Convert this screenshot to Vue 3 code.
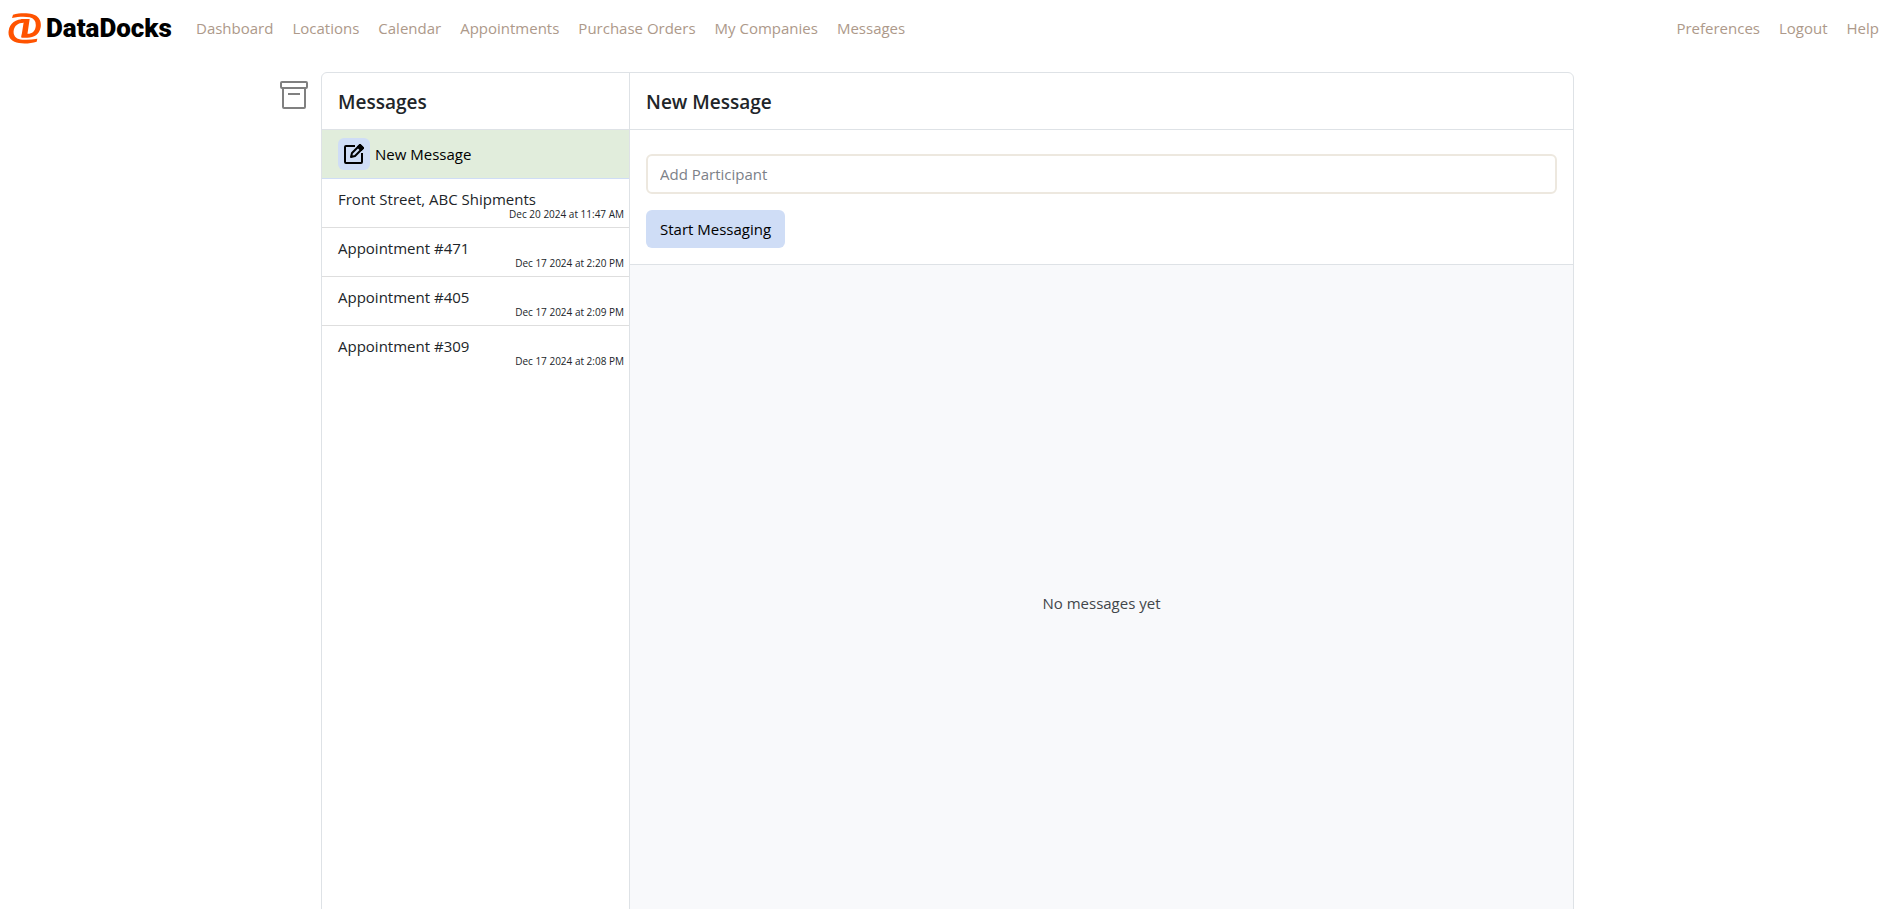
<script setup>
import { ref } from 'vue'

const mainLinks = ['Dashboard', 'Locations', 'Calendar', 'Appointments', 'Purchase Orders', 'My Companies', 'Messages']
const userLinks = ['Preferences', 'Logout', 'Help']
const threads = [
  { title: 'Front Street, ABC Shipments', date: 'Dec 20 2024 at 11:47 AM' },
  { title: 'Appointment #471', date: 'Dec 17 2024 at 2:20 PM' },
  { title: 'Appointment #405', date: 'Dec 17 2024 at 2:09 PM' },
  { title: 'Appointment #309', date: 'Dec 17 2024 at 2:08 PM' }
]
const participant = ref('')
</script>

<template>
  <div class="page">
    <header class="navbar">
      <a class="brand" href="#" aria-label="DataDocks">
        <svg class="brand-mark" viewBox="0 0 99 93" fill="#ff5300" aria-hidden="true">
          <path d="M15 5C35 0 58 0 74 4C93 9 101 25 98 43C94 65 78 74 58 74H40L42 62H59C73 62 81 54 83 41C85 26 79 17 65 13C50 10 31 11 12 15Z" />
          <path d="M49 18L47 29C30 29 19 38 17 53C15 69 26 79 43 80C58 81 73 80 88 77L86 86C70 91 49 93 33 90C10 87-1 73 2 53C5 31 23 18 49 18Z" />
          <path d="M40 18H65L57 72H40L47 28H38Z" />
        </svg>
        <span class="brand-name">DataDocks</span>
      </a>
      <nav class="links" aria-label="Main">
        <a v-for="link in mainLinks" :key="link" href="#">{{ link }}</a>
      </nav>
      <nav class="links user-links" aria-label="Account">
        <a v-for="link in userLinks" :key="link" href="#">{{ link }}</a>
      </nav>
    </header>

    <main class="layout">
      <button class="archive" type="button" aria-label="Archive">
        <svg viewBox="0 0 28 28" fill="none" stroke="#808080" stroke-width="2" aria-hidden="true">
          <rect x="1" y="1" width="26" height="6" rx="1" />
          <path d="M3 7V26a1 1 0 0 0 1 1H24a1 1 0 0 0 1-1V7M8 13H20" />
        </svg>
      </button>
      <div class="card">
        <aside class="sidebar">
          <h2 class="heading">Messages</h2>
          <button class="new-message" type="button">
            <span class="compose">
              <svg viewBox="0 0 20 20" fill="none" stroke="#000" stroke-width="2" stroke-linejoin="round" aria-hidden="true">
                <path d="M11 2H2a1 1 0 0 0-1 1V18a1 1 0 0 0 1 1H17a1 1 0 0 0 1-1V9" />
                <path d="M7 13L8 9L16 1L19 4L11 12Z" />
                <path d="M14 3L16 1L19 4L17 6Z" fill="#000" />
              </svg>
            </span>
            <span>New Message</span>
          </button>
          <ul class="threads">
            <li v-for="thread in threads" :key="thread.title">
              <a class="thread" href="#">
                <span class="thread-title">{{ thread.title }}</span>
                <time class="thread-date">{{ thread.date }}</time>
              </a>
            </li>
          </ul>
        </aside>
        <section class="conversation">
          <h2 class="heading">New Message</h2>
          <form class="composer" @submit.prevent>
            <input v-model="participant" type="text" placeholder="Add Participant" aria-label="Add Participant" />
            <button type="submit">Start Messaging</button>
          </form>
          <div class="empty">No messages yet</div>
        </section>
      </div>
    </main>
  </div>
</template>

<style>
body {
  margin: 0;
  background: #fff;
}
</style>

<style scoped>
.page,
.page * {
  box-sizing: border-box;
}

.page {
  height: 100vh;
  overflow: hidden;
  font-family: "Segoe UI", "Open Sans", "Noto Sans", sans-serif;
  font-size: 15px;
  line-height: 24px;
  color: #212529;
}

a {
  color: inherit;
  text-decoration: none;
}

button,
input {
  font: inherit;
}

.navbar {
  display: flex;
  align-items: center;
  height: 56px;
  padding: 0 14px 0 8px;
}

.brand {
  display: flex;
  align-items: center;
  gap: 5px;
  margin-right: 24px;
  color: #000;
}

.brand-mark {
  width: 33px;
  height: 31px;
}

.brand-name {
  width: 126px;
  font-family: Roboto, sans-serif;
  font-size: 26px;
  font-weight: 900;
}

.links {
  display: flex;
  gap: 19px;
  color: #ad998a;
}

.user-links {
  margin-left: auto;
}

.layout {
  display: grid;
  grid-template-columns: 41px minmax(0, 1fr) 39px;
  max-width: 1333px;
  margin: 16px auto 0;
}

.archive {
  align-self: start;
  width: 28px;
  height: 28px;
  margin-top: 9px;
  padding: 0;
  border: 0;
  background: none;
}

.archive svg {
  display: block;
}

.card {
  display: grid;
  grid-template-columns: minmax(0, 308fr) minmax(0, 943fr);
  height: calc(100vh - 39px);
  border: 1px solid #dee2e6;
  border-radius: 6px;
}

.sidebar {
  border-right: 1px solid #dee2e6;
}

.heading {
  height: 57px;
  margin: 0;
  padding: 16px;
  border-bottom: 1px solid #dee2e6;
  font-size: 19px;
  font-weight: 600;
  line-height: 26px;
}

.new-message {
  display: flex;
  align-items: center;
  gap: 5px;
  width: 100%;
  height: 49px;
  padding: 0 16px;
  border: 0;
  border-bottom: 1px solid #cfddf6;
  background: #e1eddc;
  color: #000;
}

.compose {
  display: grid;
  place-items: center;
  width: 32px;
  height: 32px;
  border-radius: 6px;
  background: #cfddf6;
}

.compose svg {
  width: 20px;
  height: 20px;
}

.threads {
  margin: 0;
  padding: 0;
  list-style: none;
}

.thread {
  display: flex;
  flex-direction: column;
  height: 49px;
  padding: 8px 5px 0 16px;
  border-bottom: 1px solid #dedede;
}

li:last-child .thread {
  border-bottom: 0;
}

.thread-date {
  align-self: flex-end;
  font-size: 10px;
  line-height: 6px;
}

.conversation {
  display: flex;
  flex-direction: column;
  min-width: 0;
}

.composer {
  display: flex;
  flex-direction: column;
  align-items: flex-start;
  gap: 16px;
  padding: 24px 16px 16px;
  border-bottom: 1px solid #dee2e6;
}

.composer input {
  width: 100%;
  height: 40px;
  padding: 0 12px;
  border: 2px solid #ede8df;
  border-radius: 6px;
  background: #fff;
  color: #212529;
}

.composer input::placeholder {
  color: #7c8188;
  opacity: 1;
}

.composer button {
  height: 38px;
  padding: 0 14px;
  border: 0;
  border-radius: 6px;
  background: #cfddf6;
  color: #000;
}

.empty {
  display: grid;
  flex: 1;
  place-items: center;
  background: #f8f9fb;
  color: #42464a;
}
</style>
